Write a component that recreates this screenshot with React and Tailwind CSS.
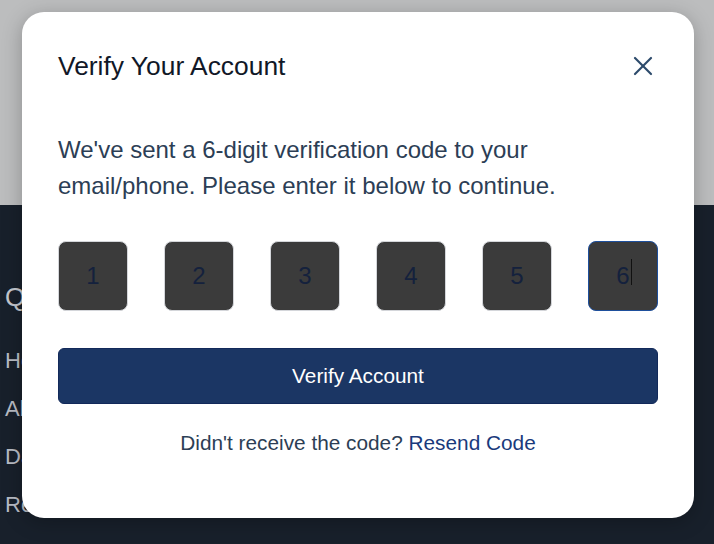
import React from 'react';

/**
 * Verification modal over a dimmed page
 */
const CloseIcon = () => (
  <svg width="20" height="20" viewBox="0 0 20 20" fill="none" stroke="#2c4a6b" strokeWidth="2.2" strokeLinecap="round">
    <path d="M2 2L18 18" />
    <path d="M18 2L2 18" />
  </svg>
);

const App = () => {
  const digits = ['1', '2', '3', '4', '5', '6'];
  const footerLinks = ['Home', 'About', 'Dashboard', 'Resources', 'Contact'];

  return (
    <div className="relative w-[714px] h-[544px] overflow-hidden font-['Liberation_Sans',Arial,sans-serif]">
      {/* Page behind the overlay */}
      <div className="h-[205px] bg-[#bcbdbe]" />
      <div className="h-[339px] bg-[#18202b] pl-[5px] pt-[77px]">
        <h3 className="text-[26px] leading-[30px] text-[#c3c7ce]">Quick Links</h3>
        <ul className="mt-[38px] flex flex-col gap-[26px]">
          {footerLinks.map((link) => (
            <li key={link} className="text-[22px] leading-[22px] text-[#b8bcc4]">{link}</li>
          ))}
        </ul>
      </div>

      {/* Modal */}
      <div className="absolute left-[22px] top-[12px] w-[672px] h-[506px] bg-white rounded-[22px] shadow-[0_4px_20px_rgba(0,0,0,0.25)] px-[36px] pt-[36px]">
        <div className="flex items-center justify-between h-[36px]">
          <h2 className="text-[26.4px] leading-[32px] text-[#111827]">Verify Your Account</h2>
          <button className="w-[36px] h-[36px] flex items-center justify-center -mr-[3px]">
            <CloseIcon />
          </button>
        </div>

        <p className="mt-[48px] text-[24px] leading-[36px] text-[#2c3e55]">
          We've sent a 6-digit verification code to your email/phone. Please enter it below to continue.
        </p>

        <div className="mt-[37px] flex justify-between">
          {digits.map((d, i) => (
            <div
              key={d}
              className={`w-[70px] h-[70px] rounded-[8px] bg-[#3b3b3b] flex items-center justify-center text-[24px] text-[#14213d] border ${
                i === 5 ? 'border-[#1e4f9c]' : 'border-[#d4d6da]'
              }`}
            >
              <span className="relative">
                {d}
                {i === 5 && <span className="absolute -right-[2px] top-[1px] w-px h-[26px] bg-[#111]" />}
              </span>
            </div>
          ))}
        </div>

        <button className="mt-[37px] w-full h-[56px] rounded-[6px] bg-[#1b3664] border border-[#12295a] text-white text-[20.8px]">
          Verify Account
        </button>

        <p className="mt-[25px] text-center text-[20.8px] leading-[28px] text-[#2c3e55]">
          Didn't receive the code? <a href="#" className="text-[#1a3a7c]">Resend Code</a>
        </p>
      </div>
    </div>
  );
};

export default App;
